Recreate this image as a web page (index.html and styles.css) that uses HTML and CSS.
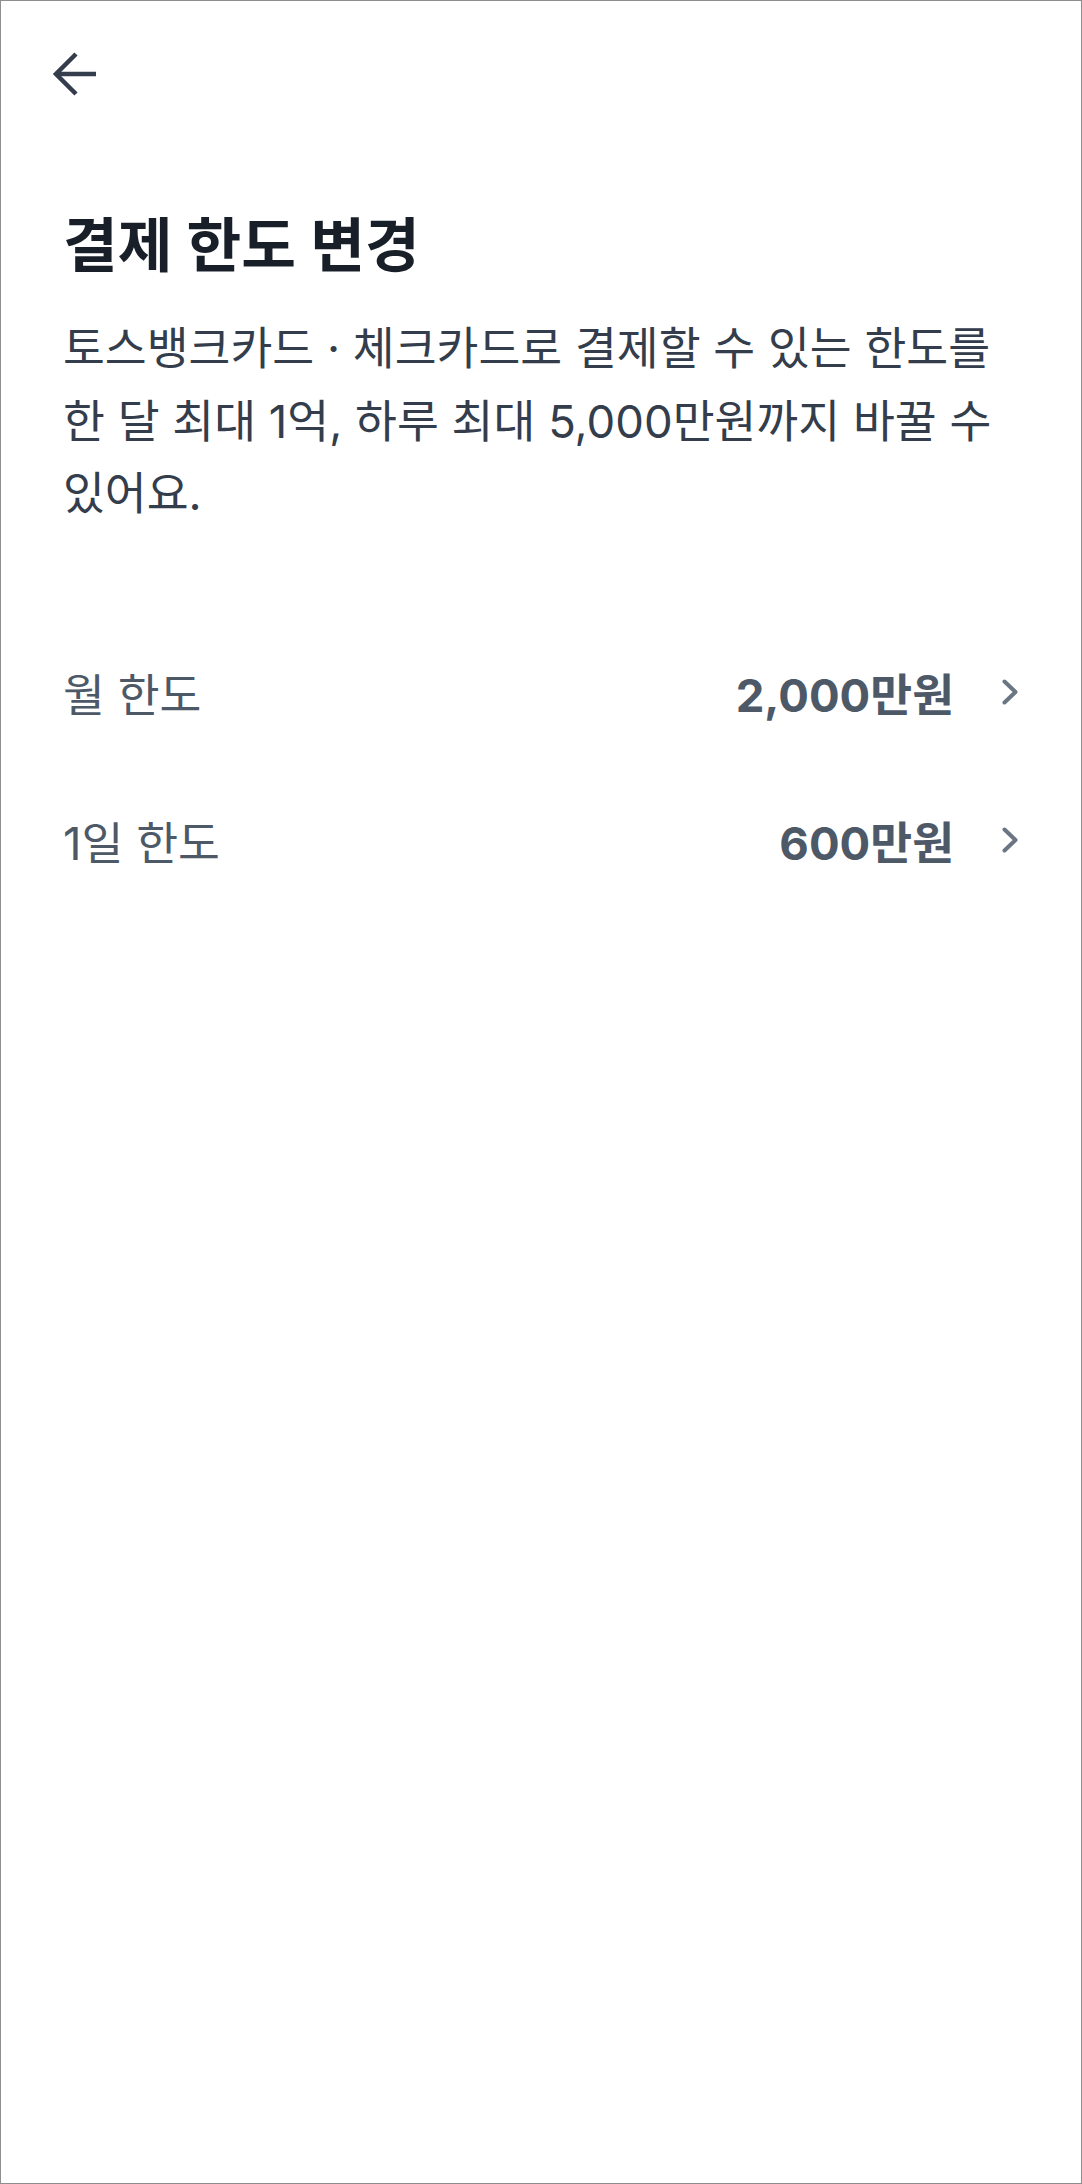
FILE: index.html
```html
<!DOCTYPE html>
<html lang="ko">
<head>
    <meta charset="utf-8" />
    <title>결제 한도 변경</title>
    <link rel="stylesheet" href="styles.css">
</head>
<body>
    <div class="screen">
        <!--상단 바-->
        <div class="top-bar">
            <a class="back" href="#">
                <svg width="48" height="48" viewBox="0 0 48 48" fill="none" stroke="#333d4b" stroke-width="4.5">
                    <path d="M5 24H45" />
                    <path d="M25 4L5 24L25 44" stroke-linejoin="miter" />
                </svg>
            </a>
        </div>
        <div class="content">
            <h1 class="title">결제 한도 변경</h1>
            <p class="desc">토스뱅크카드 · 체크카드로 결제할 수 있는 한도를 한 달 최대 1억, 하루 최대 5,000만원까지 바꿀 수 있어요.</p>
            <!--한도 목록-->
            <ul class="limit-list">
                <li class="limit-row">
                    <span class="label">월 한도</span>
                    <span class="value">2,000만원</span>
                    <svg class="chevron" width="20" height="30" viewBox="0 0 20 30" fill="none" stroke="#6b7684" stroke-width="4" stroke-linecap="round" stroke-linejoin="round">
                        <path d="M5.5 4.5L16.5 15L5.5 25.5" />
                    </svg>
                </li>
                <li class="limit-row">
                    <span class="label">1일 한도</span>
                    <span class="value">600만원</span>
                    <svg class="chevron" width="20" height="30" viewBox="0 0 20 30" fill="none" stroke="#6b7684" stroke-width="4" stroke-linecap="round" stroke-linejoin="round">
                        <path d="M5.5 4.5L16.5 15L5.5 25.5" />
                    </svg>
                </li>
            </ul>
        </div>
    </div>
</body>
</html>
```

FILE: styles.css
```css
* {
    margin: 0;
    padding: 0;
    box-sizing: border-box;
}

ul {
    list-style: none
}

body {
    background-color: #fff;
    font-family: Inter, "Noto Sans CJK KR", sans-serif;
}

.screen {
    width: 1082px;
    height: 2184px;
    border: 1px solid #8e8e8e;
    background-color: #fff;
}

.top-bar {
    height: 146px;
    display: flex;
    align-items: center;
    padding-left: 50px;
}

    .top-bar .back {
        display: block;
        width: 48px;
        height: 48px;
    }

    .top-bar svg {
        display: block;
    }

.content {
    padding: 0 62px;
}

.title {
    margin-top: 60px;
    font-size: 59.5px;
    line-height: 77px;
    font-weight: 700;
    color: #191f28;
}

.desc {
    margin-top: 29px;
    font-size: 45.5px;
    line-height: 72.5px;
    color: #333d4b;
    word-break: keep-all;
}

.limit-list {
    margin-top: 87px;
}

.limit-row {
    height: 148px;
    display: flex;
    align-items: center;
    font-size: 45.5px;
    color: #4e5968;
}

    .limit-row .label {
        flex: 1;
    }

    .limit-row .value {
        font-weight: 700;
    }

    .limit-row .chevron {
        margin-left: 45px;
        flex-shrink: 0;
    }
```
